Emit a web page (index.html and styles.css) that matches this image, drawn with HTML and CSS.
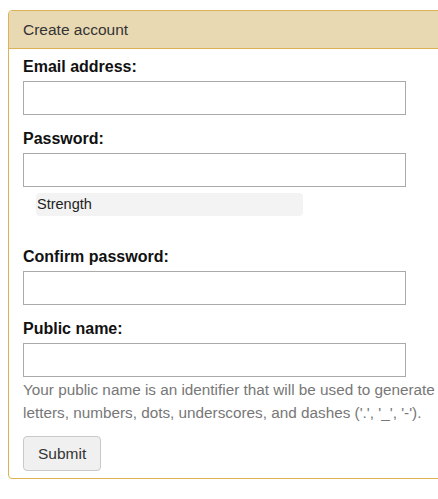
FILE: index.html
```html
<!DOCTYPE html>
<html lang="en">
<head>
<meta charset="utf-8">
<title>Create account</title>
<link rel="stylesheet" href="styles.css">
</head>
<body>
<div class="panel">
  <div class="panel-heading">Create account</div>
  <form class="panel-body">
    <div class="field">
      <label class="label" for="email">Email address:</label>
      <input class="input" id="email" type="email">
    </div>
    <div class="field">
      <label class="label" for="password">Password:</label>
      <input class="input" id="password" type="password">
      <div class="strength">Strength</div>
    </div>
    <div class="field field-confirm">
      <label class="label" for="confirm">Confirm password:</label>
      <input class="input" id="confirm" type="password">
    </div>
    <div class="field field-last">
      <label class="label" for="username">Public name:</label>
      <input class="input" id="username" type="text">
      <p class="help">Your public name is an identifier that will be used to generate<br>letters, numbers, dots, underscores, and dashes ('.', '_', '-').</p>
    </div>
    <button class="btn" type="button">Submit</button>
  </form>
</div>
</body>
</html>
```
FILE: styles.css
```css
html {
  overflow: hidden;
}
body {
  margin: 10px 0 0 8px;
  font-family: "Liberation Sans", Arial, sans-serif;
  color: #333;
  background: #fff;
}
.panel {
  width: 620px;
  border: 1px solid #ddb257;
  border-radius: 4px;
  background: #fff;
}
.panel-heading {
  background: #e9d9b3;
  border-bottom: 1px solid #ddb257;
  border-radius: 3px 3px 0 0;
  padding: 8px 14px 8px 14px;
  font-size: 15.5px;
  line-height: 21px;
  color: #333;
}
.panel-body {
  display: flex;
  flex-direction: column;
  align-items: flex-start;
  padding: 8px 14px 7px 14px;
  margin: 0;
}
.field {
  display: flex;
  flex-direction: column;
  align-items: flex-start;
  margin-bottom: 14px;
}
.field-confirm {
  margin-top: 17px;
}
.field-last {
  margin-bottom: 12px;
}
.label {
  font-size: 16px;
  font-weight: bold;
  line-height: 20px;
  color: #111;
  margin-bottom: 4px;
}
.input {
  box-sizing: border-box;
  width: 383px;
  height: 34px;
  margin: 0;
  border: 1px solid #aaa;
  border-radius: 0;
  background: #fff;
  font: inherit;
}
.strength {
  box-sizing: border-box;
  width: 267px;
  height: 23px;
  margin: 6px 0 0 13px;
  padding: 0 0 0 1px;
  background: #f3f3f3;
  border-radius: 4px;
  font-size: 14.5px;
  line-height: 23px;
  color: #222;
}
.help {
  margin: 1px 0 0 0;
  font-size: 15.3px;
  line-height: 23px;
  color: #777;
  white-space: nowrap;
}
.btn {
  box-sizing: border-box;
  height: 35px;
  padding: 0 14px;
  border: 1px solid #c9c9c9;
  border-radius: 4px;
  background: #f0f0f0;
  font-family: inherit;
  font-size: 15.5px;
  color: #333;
}
```
